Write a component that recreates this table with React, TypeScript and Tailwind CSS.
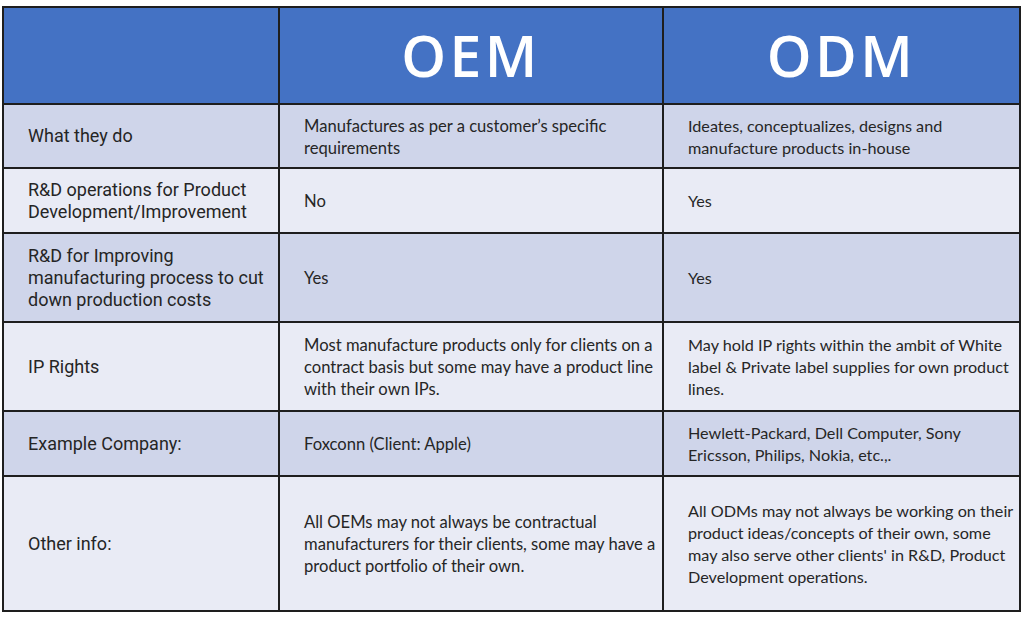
const rows: { label: string[]; oem: string[]; odm: string[]; h: string; dark: boolean }[] = [
  {
    label: ["What they do"],
    oem: ["Manufactures as per a customer’s specific", "requirements"],
    odm: ["Ideates, conceptualizes, designs and", "manufacture products in-house"],
    h: "h-[64px]",
    dark: true,
  },
  {
    label: ["R&D operations for Product", "Development/Improvement"],
    oem: ["No"],
    odm: ["Yes"],
    h: "h-[65px]",
    dark: false,
  },
  {
    label: ["R&D for Improving", "manufacturing process to cut", "down production costs"],
    oem: ["Yes"],
    odm: ["Yes"],
    h: "h-[89px]",
    dark: true,
  },
  {
    label: ["IP Rights"],
    oem: [
      "Most manufacture products only for clients on a",
      "contract basis but some may have a product line",
      "with their own IPs.",
    ],
    odm: [
      "May hold IP rights within the ambit of White",
      "label & Private label supplies for own product",
      "lines.",
    ],
    h: "h-[89px]",
    dark: false,
  },
  {
    label: ["Example Company:"],
    oem: ["Foxconn (Client: Apple)"],
    odm: ["Hewlett-Packard, Dell Computer, Sony", "Ericsson, Philips, Nokia, etc.,."],
    h: "h-[65px]",
    dark: true,
  },
  {
    label: ["Other info:"],
    oem: [
      "All OEMs may not always be contractual",
      "manufacturers for their clients, some may have a",
      "product portfolio of their own.",
    ],
    odm: [
      "All ODMs may not always be working on their",
      "product ideas/concepts of their own, some",
      "may also serve other clients' in R&D, Product",
      "Development operations.",
    ],
    h: "h-[135px]",
    dark: false,
  },
]

function Lines({ lines }: { lines: string[] }) {
  return (
    <>
      {lines.map((l, i) => (
        <div key={i} className="whitespace-nowrap">
          {l}
        </div>
      ))}
    </>
  )
}

export default function App() {
  return (
    <div className="w-[1024px] h-[618px] bg-white pt-[6px] pl-[2px]">
      <div className="grid grid-cols-[276px_384px_357px] w-[1019px] border-t-2 border-l-2 border-[#1e1e1e]">
        {/* Header */}
        <div className="h-[97px] bg-[#4472c4] border-r-2 border-b-2 border-[#1e1e1e]" />
        <div className="h-[97px] bg-[#4472c4] border-r-2 border-b-2 border-[#1e1e1e] flex items-center justify-center">
          <span className="text-white text-[57px] font-semibold tracking-[0.06em] font-['Open_Sans',sans-serif]">
            OEM
          </span>
        </div>
        <div className="h-[97px] bg-[#4472c4] border-r-2 border-b-2 border-[#1e1e1e] flex items-center justify-center">
          <span className="text-white text-[57px] font-semibold tracking-[0.06em] font-['Open_Sans',sans-serif]">
            ODM
          </span>
        </div>

        {rows.map((r, i) => {
          const bg = r.dark ? "bg-[#cfd5ea]" : "bg-[#e9ebf5]"
          return (
            <div key={i} className="contents">
              <div
                className={`${r.h} ${bg} border-r-2 border-b-2 border-[#1e1e1e] flex flex-col justify-center pl-[24px] text-[18px] leading-[22px] text-[#252525] font-['Roboto',sans-serif]`}
              >
                <Lines lines={r.label} />
              </div>
              <div
                className={`${r.h} ${bg} border-r-2 border-b-2 border-[#1e1e1e] flex flex-col justify-center pl-[24px] pt-[1px] text-[16.6px] leading-[22px] text-[#262626] font-['Lato',sans-serif]`}
              >
                <Lines lines={r.oem} />
              </div>
              <div
                className={`${r.h} ${bg} border-r-2 border-b-2 border-[#1e1e1e] flex flex-col justify-center pl-[24px] pt-[1px] text-[16.2px] leading-[22px] text-[#262626] font-['Lato',sans-serif] overflow-hidden`}
              >
                <Lines lines={r.odm} />
              </div>
            </div>
          )
        })}
      </div>
    </div>
  )
}
